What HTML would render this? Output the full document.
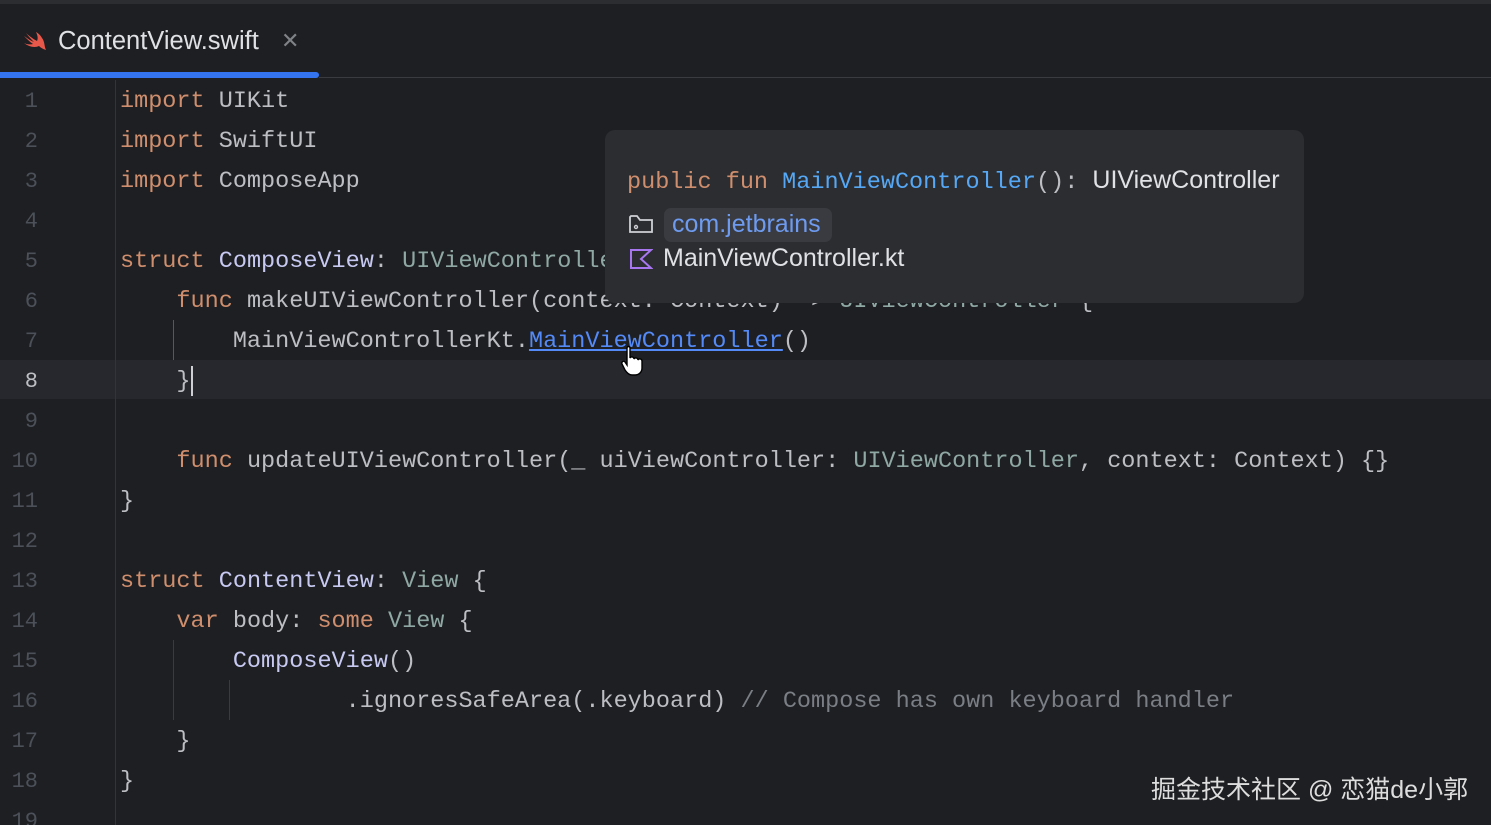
<!DOCTYPE html><html><head><meta charset="utf-8"><style>
*{margin:0;padding:0;box-sizing:border-box}
html{height:825px;overflow:hidden}
body{width:1491px;height:825px;background:#1e1f22;overflow:hidden;position:relative;font-family:"Liberation Mono",monospace;color:#bcbec4}
.top{position:absolute;left:0;top:0;width:1491px;height:4px;background:#2b2d30}
.tab{position:absolute;left:58px;top:27px;font:25.5px "Liberation Sans",sans-serif;color:#dfe1e5}
.x{position:absolute;left:281px;top:28px;font:22px "Liberation Sans",sans-serif;color:#7f8287}
.ul{position:absolute;left:0;top:72px;width:319px;height:6px;background:#3574f0;border-radius:0 3px 3px 0}
.sep{position:absolute;left:319px;top:77px;right:0;height:1px;background:#393b40}
.gut{position:absolute;left:115px;top:80px;width:1px;height:745px;background:#313438}
.hl{position:absolute;left:0;top:360px;width:1491px;height:39px;background:#26282e}
.ln{position:absolute;width:38px;text-align:right;left:0;font-size:22px;color:#4b5059;line-height:40px;margin-top:2px}
.c{position:absolute;left:120px;font-size:23.5px;line-height:40px;white-space:pre;margin-top:2px}
.k{color:#cf8e6d}.t{color:#8fa8a3}.s{color:#c7c9f2}.cm{color:#7a7e85}.lk{color:#548af7;text-decoration:underline}
.ig{position:absolute;width:1px;background:#393b40}
.pop{position:absolute;left:605px;top:130px;width:699px;height:173px;background:#2b2d30;border-radius:10px}
.wm{position:absolute;left:1151px;top:770px;font:25px "Liberation Sans","Noto Sans CJK SC",sans-serif;color:#ddd}
</style></head><body>
<div class="top"></div>
<svg style="position:absolute;left:22px;top:30px" width="26" height="24" viewBox="0 0 26 24"><path d="M2 13 C7 17 13 18 17 16 C19 18 21 19 24 20 C22 16 23 12 20 8 C18 4 14 2 14 2 C16 6 16 9 15 11 C11 9 6 5 4 3 C7 7 10 10 12 12 C9 11 5 8 2 6 C5 9 8 12 11 14 C7 15 4 14 2 13Z" fill="#e8584a"/></svg>
<div class="tab">ContentView.swift</div><div class="x">✕</div>
<div class="ul"></div><div class="sep"></div>
<div class="hl"></div>
<div class="gut"></div>
<div class="ig" style="left:173px;top:320px;height:40px;background:#55585e"></div>
<div class="ig" style="left:173px;top:640px;height:80px"></div>
<div class="ig" style="left:229px;top:680px;height:40px"></div>
<div class="ln" style="top:80px">1</div><div class="ln" style="top:120px">2</div><div class="ln" style="top:160px">3</div><div class="ln" style="top:200px">4</div><div class="ln" style="top:240px">5</div><div class="ln" style="top:280px">6</div><div class="ln" style="top:320px">7</div><div class="ln" style="top:360px;color:#bcbec4">8</div><div class="ln" style="top:400px">9</div><div class="ln" style="top:440px">10</div><div class="ln" style="top:480px">11</div><div class="ln" style="top:520px">12</div><div class="ln" style="top:560px">13</div><div class="ln" style="top:600px">14</div><div class="ln" style="top:640px">15</div><div class="ln" style="top:680px">16</div><div class="ln" style="top:720px">17</div><div class="ln" style="top:760px">18</div><div class="ln" style="top:800px;height:25px;overflow:hidden">19</div>
<div class="c" style="top:80px"><span class="k">import</span> UIKit</div>
<div class="c" style="top:120px"><span class="k">import</span> SwiftUI</div>
<div class="c" style="top:160px"><span class="k">import</span> ComposeApp</div>
<div class="c" style="top:240px"><span class="k">struct</span> <span class="s">ComposeView</span>: <span class="t">UIViewController</span></div>
<div class="c" style="top:280px">    <span class="k">func</span> makeUIViewController(context: Context) -&gt; <span class="t">UIViewController</span> {</div>
<div class="c" style="top:320px">        MainViewControllerKt.<span class="lk">MainViewController</span>()</div>
<div class="c" style="top:360px">    }<span style="display:inline-block;width:2px;height:30px;background:#ced0d6;vertical-align:middle"></span></div>
<div class="c" style="top:440px">    <span class="k">func</span> updateUIViewController(_ uiViewController: <span class="t">UIViewController</span>, context: Context) {}</div>
<div class="c" style="top:480px">}</div>
<div class="c" style="top:560px"><span class="k">struct</span> <span class="s">ContentView</span>: <span class="t">View</span> {</div>
<div class="c" style="top:600px">    <span class="k">var</span> body: <span class="k">some</span> <span class="t">View</span> {</div>
<div class="c" style="top:640px">        <span class="s">ComposeView</span>()</div>
<div class="c" style="top:680px">                .ignoresSafeArea(.keyboard) <span class="cm">// Compose has own keyboard handler</span></div>
<div class="c" style="top:720px">    }</div>
<div class="c" style="top:760px">}</div>
<div class="pop">
<div style="position:absolute;left:22px;top:36px;font-size:23.5px;white-space:pre"><span class="k">public fun</span> <span style="color:#56a8f5">MainViewController</span>(): <span style="font-family:'Liberation Sans',sans-serif;font-size:25px;color:#dfe1e5">UIViewController</span></div>
<svg style="position:absolute;left:23px;top:83px" width="26" height="22" viewBox="0 0 26 22"><path d="M2 4 V19 H24 V7 H12 L9 3 H3 Z" fill="none" stroke="#ced0d6" stroke-width="1.8"/><circle cx="8" cy="14" r="1.5" fill="none" stroke="#ced0d6" stroke-width="1.4"/></svg>
<div style="position:absolute;left:59px;top:78px;width:168px;height:34px;background:#393b40;border-radius:7px"></div>
<div style="position:absolute;left:67px;top:80px;font:25px 'Liberation Sans',sans-serif;color:#6e9bf0">com.jetbrains</div>
<svg style="position:absolute;left:24px;top:118px" width="24" height="22" viewBox="0 0 24 22"><path d="M2 2 H22 L12 11 L22 20 H2 Z" fill="none" stroke="#a877f0" stroke-width="2"/></svg>
<div style="position:absolute;left:58px;top:114px;font:25px 'Liberation Sans',sans-serif;color:#dfe1e5">MainViewController.kt</div>
</div>
<svg style="position:absolute;left:620px;top:345px" width="28" height="32" viewBox="0 0 28 32"><path d="M7 3 C7 1 10 1 10 3 V13 C11 11 14 12 14 14 C15 12 18 13 18 15 C19 13 22 14 22 16 V23 C22 27 19 30 15 30 H12 C9 30 7 28 5 25 L2 19 C1 17 4 15 5 17 L7 20 Z" fill="#fff" stroke="#000" stroke-width="1.4"/></svg>
<div class="wm">掘金技术社区 @ 恋猫de小郭</div>
</body></html>
